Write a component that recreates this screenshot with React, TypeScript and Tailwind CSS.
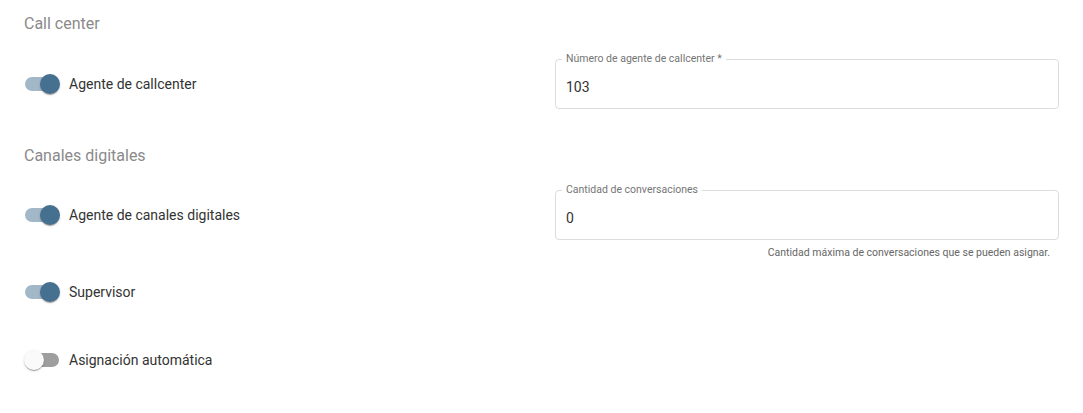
import React from "react";

function Toggle({ on, label }: { on: boolean; label: string }) {
  return (
    <div className="flex items-center h-[38px]">
      <div className="relative w-[36px] h-[20px] shrink-0">
        <div
          className={
            "absolute left-[1px] top-[3px] w-[34px] h-[14px] rounded-full " +
            (on ? "bg-[#a2b7c7]" : "bg-[#9e9e9e]")
          }
        />
        <div
          className={
            "absolute top-0 w-[20px] h-[20px] rounded-full shadow-[0_2px_1px_-1px_rgba(0,0,0,0.2),0_1px_1px_0_rgba(0,0,0,0.14),0_1px_3px_0_rgba(0,0,0,0.12)] " +
            (on ? "left-[16px] bg-[#46708f]" : "left-0 bg-[#fafafa]")
          }
        />
      </div>
      <span className="ml-[9px] text-sm text-[#333333]">{label}</span>
    </div>
  );
}

function OutlinedField({ label, value }: { label: string; value: string }) {
  return (
    <div className="relative h-[50px] border border-[#dcdcdc] rounded-[4px] flex items-center px-[10px] pt-[6px]">
      <span className="absolute -top-[8px] left-[6px] px-[4px] bg-white text-[10.5px] leading-[14px] text-[#757575]">
        {label}
      </span>
      <span className="text-sm text-[#333333]">{value}</span>
    </div>
  );
}

export default function App() {
  return (
    <div
      className="w-[1083px] h-[413px] bg-white px-6 pt-3"
      style={{ fontFamily: "Roboto, 'Liberation Sans', sans-serif" }}
    >
      <h3 className="h-6 leading-6 text-base text-[#8a8a8a]">Call center</h3>

      <div className="grid grid-cols-[507px_1fr] gap-x-6 mt-[23px]">
        <div className="flex items-center h-[50px]">
          <Toggle on label="Agente de callcenter" />
        </div>
        <OutlinedField label="Número de agente de callcenter *" value="103" />
      </div>

      <h3 className="h-6 leading-6 text-base text-[#8a8a8a] mt-[35px]">
        Canales digitales
      </h3>

      <div className="grid grid-cols-[507px_1fr] gap-x-6 mt-[22px]">
        <div className="flex items-center h-[50px]">
          <Toggle on label="Agente de canales digitales" />
        </div>
        <div className="flex flex-col">
          <OutlinedField label="Cantidad de conversaciones" value="0" />
          <p className="mt-[6px] pr-[9px] text-right text-[10.5px] leading-[13px] text-[#666666]">
            Cantidad máxima de conversaciones que se pueden asignar.
          </p>
        </div>
      </div>

      <div className="mt-[14px]">
        <Toggle on label="Supervisor" />
      </div>
      <div className="mt-[30px]">
        <Toggle on={false} label="Asignación automática" />
      </div>
    </div>
  );
}
